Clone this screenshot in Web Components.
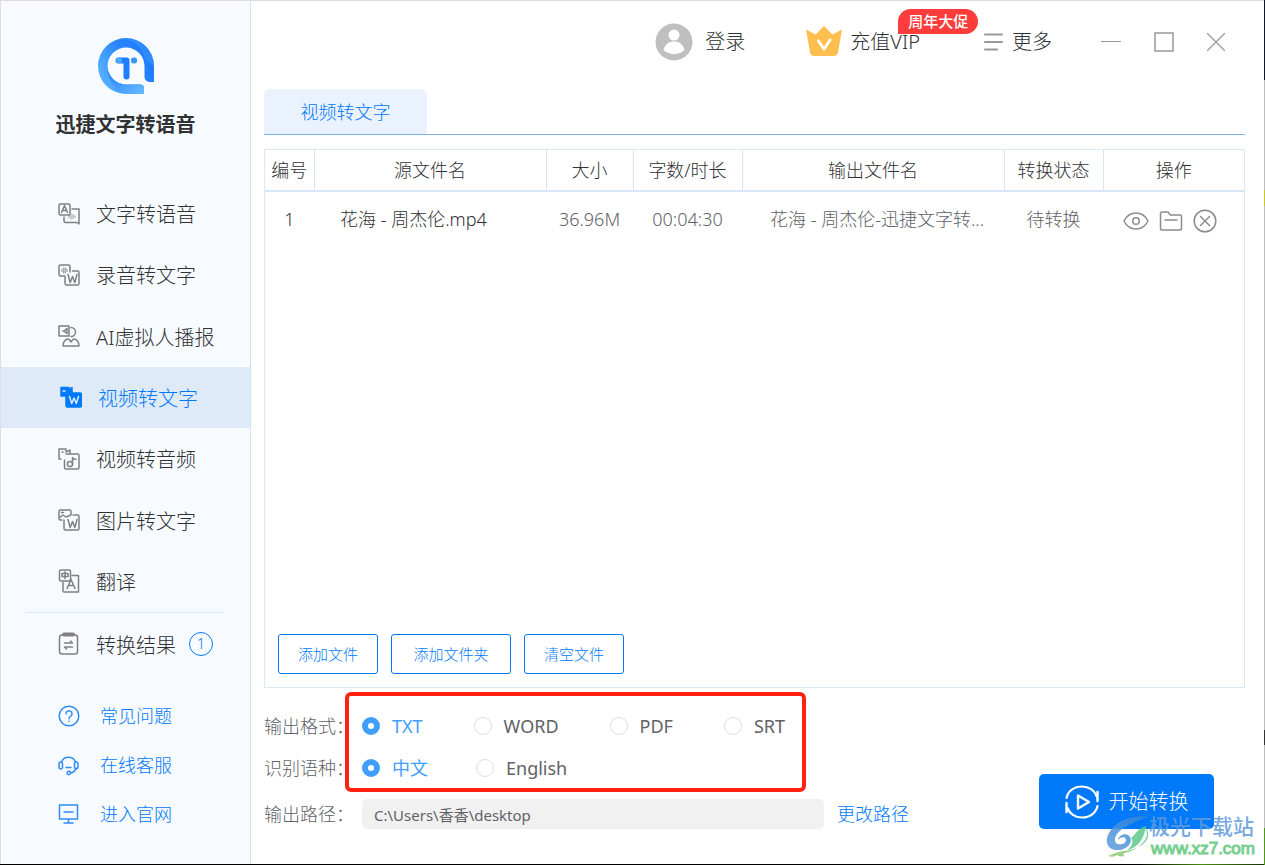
<!DOCTYPE html>
<html lang="zh-CN">
<head>
<meta charset="utf-8">
<title>迅捷文字转语音</title>
<style>
html,body{margin:0;height:100%}
body{font-family:"Noto Sans","Noto Sans CJK SC",sans-serif;color:#303133;font-weight:300}
</style>
</head>
<body>
<app-window></app-window>
<script>
const define=(name,css,html)=>customElements.define(name,class extends HTMLElement{
  connectedCallback(){
    if(this.shadowRoot)return;
    const root=this.attachShadow({mode:"open"});
    const t=document.createElement("template");
    t.innerHTML=`<style>*,:host{box-sizing:border-box}button,input{font:inherit;color:inherit}button{background:none;border:0;padding:0;cursor:pointer}a{color:inherit;text-decoration:none}svg{display:block;flex:none}${css}</style>${typeof html==="function"?html(this):html}`;
    root.append(t.content.cloneNode(true));
  }
});

const svg=(w,h,body)=>`<svg width="${w}" height="${h}" viewBox="0 0 ${w} ${h}" fill="none" stroke="currentColor" stroke-width="1.5" stroke-linecap="round" stroke-linejoin="round" aria-hidden="true">${body}</svg>`;
const W='<path d="M10 10.500l2.200 8 2.300-6 2.300 6 2.200-8"/>';
const icons={
  speech:svg(22,22,'<rect x="1" y="1" width="11" height="11" rx="1.5"/><path d="M3.5 9.5l3-7 3 7M4.500 7.500h4M14 6h7v15l-2-1.500H7.500a1.500 1.500 0 0 1-1.500-1.500v-4"/><path d="M11 12.500v2M13 11v5M15 11.500v4M17 12.800v1.500" stroke-width="1.300" opacity=".6"/>'),
  record:svg(22,22,'<path d="M6 12H2.500A1.500 1.500 0 0 1 1 10.500v-8A1.500 1.500 0 0 1 2.500 1h8A1.500 1.500 0 0 1 12 2.500V6M14.500 7h5A1.500 1.500 0 0 1 21 8.500v11a1.500 1.500 0 0 1-1.500 1.500h-11A1.500 1.500 0 0 1 7 19.500V12M12 6v2"/>'+W+'<path d="M4 5.500v2M5.700 4v5M7.400 4v5M9 5.500v2" stroke-width="1.300" opacity=".7"/>'),
  avatar:svg(22,22,'<path d="M10 11H1V1h10v10M5 6h1l3-2.500v5L6 6.500M13 2.500a4.500 4.500 0 0 1 0 9M5 21c0-4 2.500-7 5-7 1 0 3 3 3 3s2-3 3-3c2.500 0 5 3 5 7z"/>'),
  video:svg(22,22,'<path d="M1 1.500h8v2l3-2v8.500H1z" fill="currentColor"/><rect x="6" y="7" width="15.500" height="14" rx="1.500" fill="currentColor"/><path d="M9.500 10.500l2.200 7 2.300-5.500 2.300 5.500 2.200-7" stroke="#dfeaf8"/><path d="M3 5h2" stroke="#dfeaf8"/>'),
  audio:svg(22,22,'<path d="M3 11H1V1h7v3l4-2v4M4 4h1M8 6h11.500A1.500 1.500 0 0 1 21 7.500v12a1.500 1.500 0 0 1-1.500 1.500H8a1.500 1.500 0 0 1-1.500-1.500V12"/><circle cx="12" cy="16" r="2.600"/><path d="M14.500 16V9.500c.5 1.500 2 2 3.500 1.800"/>'),
  image:svg(22,22,'<path d="M4 11H2.500A1.500 1.500 0 0 1 1 9.500v-7A1.500 1.500 0 0 1 2.500 1h9A1.500 1.500 0 0 1 13 2.500V6M1 9l4-3 3 2 5-2M3.500 3.500h2M15 6h4.500A1.500 1.500 0 0 1 21 7.500v12a1.500 1.500 0 0 1-1.500 1.500h-12A1.500 1.500 0 0 1 6 19.500V11"/>'+W),
  translate:svg(22,24,'<rect x="1.500" y="1" width="11" height="11" rx="1.500"/><path d="M4 4.500h6v3H4zM7 2.800v7M14 6.500h6.500V23H7A1.500 1.500 0 0 1 5 21.500V13M9 19.500l4-9 4 9M10.500 16.500h5"/>'),
  result:svg(22,24,'<rect x="1.500" y="3" width="18" height="19" rx="2.500"/><path d="M6 2.500h9" stroke-width="4"/><path d="M6.500 11h8l-2-2M14.500 15h-8l2 2"/>'),
  help:svg(22,22,'<circle cx="11" cy="11" r="9.800"/><path d="M8 8.800a3 3 0 1 1 4.500 2.600c-1 .6-1.500 1-1.500 2.300M11 16.200v.3"/>'),
  service:svg(22,22,'<path d="M3.500 8a7.500 7.500 0 0 1 14 0M18 14c-.8 3-2.500 4.500-5.500 5M8 13.500h5"/><rect x="1" y="8" width="3.500" height="7" rx="1.700"/><rect x="16.500" y="8" width="3.500" height="7" rx="1.700"/><circle cx="10.800" cy="19" r="1.700"/>'),
  site:svg(22,22,'<path d="M1.500 2h18v14h-18zM6 9h9M10.500 16v3M6 20h9"/>'),
  eye:svg(26,22,'<path d="M1 11C4 5 8 3 13 3s9 2 12 8c-3 6-7 8-12 8S4 17 1 11z"/><circle cx="13" cy="11" r="3.300"/>'),
  folder:svg(24,22,'<path d="M1.500 3.500A1.500 1.500 0 0 1 3 2h6l2.500 3H21a1.500 1.500 0 0 1 1.500 1.500V18.500A1.500 1.500 0 0 1 21 20H3a1.500 1.500 0 0 1-1.500-1.500zM6 10h12"/>'),
  remove:svg(24,24,'<circle cx="12" cy="12" r="10.800"/><path d="M7.500 7.500l9 9M16.500 7.500l-9 9"/>'),
  user:'<svg width="38" height="38" viewBox="0 0 38 38" aria-hidden="true"><circle cx="19" cy="19" r="18.500" fill="#bfbfbf"/><circle cx="19" cy="12" r="5.500" fill="#fff"/><path d="M8.500 27c1.500-6 5.500-8.500 10.500-8.500S28 21 29.500 27c-5 5.500-16 5.500-21 0z" fill="#fff"/></svg>',
  crown:'<svg width="36" height="32" viewBox="0 0 36 32" aria-hidden="true"><path d="M0 3.500l9.500 5L18 0l8.500 8.500 9.500-5-4 23a4.500 4.500 0 0 1-4 3.500H8a4.500 4.500 0 0 1-4-3.500z" fill="#ffbf50"/><path d="M12.500 15l5.500 8 6-9" fill="none" stroke="#fff" stroke-width="2.800" stroke-linecap="round" stroke-linejoin="round"/></svg>',
  menu:svg(19,18,'<path d="M1 1.500h17M1 9h17M1 16.500h12" stroke="#999" stroke-width="2"/>'),
  min:svg(20,20,'<path d="M0 9.500h20" stroke="#999" stroke-width="1" stroke-linecap="butt"/>'),
  max:svg(20,20,'<path d="M1 1h18v18H1z" stroke="#999" stroke-linejoin="miter"/>'),
  close:svg(18,18,'<path d="M.5.500l17 17M17.500.500l-17 17" stroke="#999" stroke-width="1.200"/>'),
  start:svg(34,34,'<path d="M1.500 13C3 6 9 1.500 17 1.500c7 0 12.500 4 14.500 9.500M32.500 21C31 28 25 32.500 17 32.500c-7 0-12.500-4-14.500-9.500" stroke-width="2.200"/><path d="M32.500 7v9M1.500 18v9" stroke-width="2.400"/><path d="M13 10.500v13l11-6.500z" stroke-width="2.400"/>')
};

define("app-logo",`:host{display:block}`,`<svg width="56" height="56" viewBox="0 0 56 56" role="img" aria-label="logo">
<defs><linearGradient id="a" x1="0" y1=".7" x2="1" y2=".2"><stop offset="0" stop-color="#5ab4ff"/><stop offset=".5" stop-color="#2b86fb"/><stop offset="1" stop-color="#1a78ff"/></linearGradient>
<linearGradient id="b" x1="0" y1="0" x2="1" y2="1"><stop offset="0" stop-color="#1a78ff"/><stop offset="1" stop-color="#66bdff"/></linearGradient></defs>
<path d="M28 0a28 28 0 0 1 28 28v16h-4.500a5 5 0 0 1-5-5V28A18.500 18.500 0 1 0 28 46.500h14a4 4 0 0 1 4 4V56H28a28 28 0 0 1 0-56z" fill="url(#a)"/>
<path d="M9.500 28v3C10 42 17 51 28 56h18v-5.500a4 4 0 0 0-4-4H28A18.500 18.500 0 0 1 9.500 28z" fill="url(#b)"/>
<path d="M24 1c13 1 20 9 23 20l9 7A28 28 0 0 0 24 1z" fill="#4ea6ff" opacity=".35"/>
<path d="M20.500 19.500h8a3 3 0 0 1 3 3v16a2.800 2.800 0 0 1-6 0V25.500h-5a3 3 0 0 1 0-6z" fill="#1f7dff"/><circle cx="21" cy="22.500" r="3" fill="#4ea6ff"/><rect x="33" y="19.500" width="6" height="6" rx="2.500" fill="#3a95ff"/></svg>`);

define("nav-item",`:host{display:block}
a{display:flex;align-items:center;height:100%;padding-left:57px;font-size:20px;gap:16px}
i{width:22px;color:#808080;display:flex}
:host([active]) a{background:#dfeaf8;color:#0079fb;padding-left:59px}:host([active]) i{color:#0079fb}`,
e=>`<a href="#${e.getAttribute("icon")}"><i>${icons[e.getAttribute("icon")]}</i><slot></slot></a>`);

define("help-link",`:host{display:block}
a{display:flex;align-items:center;gap:20px;color:#0079fb;font-size:18px;line-height:24px}svg{color:#2f8df5}`,
e=>`<a href="#${e.getAttribute("icon")}">${icons[e.getAttribute("icon")]}<slot></slot></a>`);

define("side-bar",`:host{display:flex;flex-direction:column;flex:none;width:250px;background:#f7fbff;border-right:1px solid #cfe2f7}
header{display:flex;flex-direction:column;align-items:center;gap:16px;padding-top:37px;height:182px}
h1{margin:0;font-size:20px;line-height:30px;font-weight:700}
nav{display:grid;grid-template-rows:repeat(7,1fr);height:429px}
hr{border:0;border-top:1px solid #dcebfb;margin:0 25px;width:199px}
.result{display:flex;align-items:center;height:62px;gap:13px}
.badge{width:24px;height:24px;border:1px solid #0079fb;border-radius:50%;color:#0079fb;font-size:14px;line-height:22px;text-align:center}
.help{display:grid;gap:25px;padding:29px 0 0 57px}`,
`<header><app-logo></app-logo><h1>迅捷文字转语音</h1></header>
<nav><nav-item icon="speech">文字转语音</nav-item><nav-item icon="record">录音转文字</nav-item><nav-item icon="avatar">AI虚拟人播报</nav-item><nav-item icon="video" active>视频转文字</nav-item><nav-item icon="audio">视频转音频</nav-item><nav-item icon="image">图片转文字</nav-item><nav-item icon="translate">翻译</nav-item></nav>
<hr>
<div class="result"><nav-item icon="result">转换结果</nav-item><span class="badge">1</span></div>
<div class="help"><help-link icon="help">常见问题</help-link><help-link icon="service">在线客服</help-link><help-link icon="site">进入官网</help-link></div>`);

define("title-bar",`:host{display:flex;justify-content:flex-end;align-items:center;height:82px;padding-right:20px}
button{display:flex;align-items:center;font-size:20px;line-height:30px}
.user{gap:12px;margin-right:61px}.vip{gap:8px;margin-right:64px;position:relative}.more{gap:9px;margin-right:49px}
.win{display:flex;align-items:center;gap:33px}
.tag{position:absolute;left:92px;top:-17px;width:80px;height:25px;border-radius:13px 13px 13px 0;background:#ff3c3c;color:#fff;font-size:15px;line-height:25px;font-weight:500;text-align:center}`,
`<button class="user" type="button">${icons.user}登录</button>
<button class="vip" type="button">${icons.crown}充值VIP<span class="tag">周年大促</span></button>
<button class="more" type="button">${icons.menu}更多</button>
<div class="win"><button type="button" aria-label="最小化">${icons.min}</button><button type="button" aria-label="最大化">${icons.max}</button><button type="button" aria-label="关闭">${icons.close}</button></div>`);

define("tab-strip",`:host{display:block;border-bottom:1px solid #7fb2e8;margin-top:6px}
button{display:block;width:163px;height:45px;background:#eaf2fe;border-radius:6px 6px 0 0;color:#0079fb;font-size:18px;padding-bottom:2px}`,
`<button type="button" role="tab" aria-selected="true"><slot></slot></button>`);

define("file-table",`:host{display:block}
table{border-collapse:collapse;table-layout:fixed;width:100%;font-size:18px;line-height:24px}
th{font-weight:300;height:41px;padding:0;border-right:1px solid #d7e7f8;border-bottom:2px solid #d7e7f8}
th:last-child{border-right:0}
td{height:54px;padding:0;text-align:center;color:#606266;white-space:nowrap;overflow:hidden;text-overflow:ellipsis}
td.dark{color:#303133}td.name{text-align:left;padding-left:26px}td.out{padding:0 0 0 28px;text-align:left}
.ops{display:flex;justify-content:center;gap:10px;color:#8c8c8c;padding:4px 8px 0 0;align-items:center}
.n{width:49px}.s{width:232px}.z{width:87px}.t{width:109px}.st{width:99px}.op{width:141px}`,
`<table><colgroup><col class="n"><col class="s"><col class="z"><col class="t"><col><col class="st"><col class="op"></colgroup>
<thead><tr><th>编号</th><th>源文件名</th><th>大小</th><th>字数/时长</th><th>输出文件名</th><th>转换状态</th><th>操作</th></tr></thead>
<tbody><tr><td class="dark">1</td><td class="dark name">花海 - 周杰伦.mp4</td><td>36.96M</td><td>00:04:30</td><td class="out">花海 - 周杰伦-迅捷文字转...</td><td>待转换</td>
<td><div class="ops"><button type="button" aria-label="预览">${icons.eye}</button><button type="button" aria-label="打开文件夹">${icons.folder}</button><button type="button" aria-label="移除">${icons.remove}</button></div></td></tr></tbody></table>`);

define("outline-button",`:host{display:block}
button{height:40px;padding:0 19px 1px;border:1px solid #0079fb;border-radius:3px;color:#0079fb;font-size:15px;min-width:100px}
:host([wide]) button{min-width:120px}`,`<button type="button"><slot></slot></button>`);

define("file-panel",`:host{display:flex;flex-direction:column;flex:1;margin-top:14px;border:1px solid #dbe8f5}
.actions{display:flex;gap:13px;margin-top:auto;padding:13px}`,
`<file-table></file-table><div class="actions"><outline-button>添加文件</outline-button><outline-button wide>添加文件夹</outline-button><outline-button>清空文件</outline-button></div>`);

define("radio-set",`:host{display:flex;gap:51px;height:42px;align-items:center}
:host([compact]){gap:48px}
label{display:flex;align-items:center;gap:12px;font-size:18px;line-height:24px;color:#606266;font-weight:400}
input{appearance:none;margin:0;width:18px;height:18px;border:1px solid #dcdfe6;border-radius:50%;background:#fff}
input:checked{border:6px solid #409eff}
label:has(:checked){color:#409eff}`,
e=>e.getAttribute("options").split(",").map((o,i)=>`<label><input type="radio" name="${e.getAttribute("name")}"${i?"":" checked"}>${o}</label>`).join(""));

define("output-settings",`:host{display:grid;grid-template-columns:81px 1fr;color:#606266;font-size:18px;line-height:24px;margin-top:4px}
.labels{padding:13px 0 0}.labels span{display:flex;align-items:center;height:42px;white-space:nowrap}
.frame{justify-self:start;width:461px;height:100px;border:4px solid #ff2213;border-radius:6px;padding:9px 0 0 13px}
.path{grid-column:1/3;display:flex;align-items:center;margin-top:7px;white-space:nowrap}
.path label{width:98px}
.path input{width:462px;height:30px;border:0;border-radius:5px;background:#f1f1f1;padding:0 12px;font-size:15px;font-weight:400;margin-right:13px}
.path a{color:#0079fb}`,
`<div class="labels"><span>输出格式：</span><span>识别语种：</span></div>
<div class="frame"><radio-set name="format" options="TXT,WORD,PDF,SRT"></radio-set><radio-set compact name="lang" options="中文,English"></radio-set></div>
<div class="path"><label for="p">输出路径：</label><input id="p" type="text" readonly value="C:\\Users\\香香\\desktop"><a href="#path">更改路径</a></div>`);

define("start-button",`:host{display:block}
button{display:flex;align-items:center;justify-content:center;gap:10px;width:175px;height:55px;border-radius:5px;background:#0079fb;color:#fff;font-size:20px;line-height:24px}`,
`<button type="button">${icons.start}<slot></slot></button>`);

define("site-mark",`:host{position:absolute;right:10px;bottom:7px;display:flex;align-items:center;opacity:.85;pointer-events:none}
div{display:grid}b{font-family:"Liberation Sans","Noto Sans CJK SC",sans-serif;font-size:21px;line-height:24px;color:#5f9bdc;font-weight:500}
span{font:17px/19px "Liberation Sans",sans-serif;color:#5ec87c;-webkit-text-stroke:1px #5ec87c;padding-left:2px}`,
`<svg width="43" height="41" viewBox="0 0 43 41" aria-hidden="true"><defs><linearGradient id="g" x1="0" y1="1" x2="1" y2="0"><stop offset="0" stop-color="#5f9bdc"/><stop offset="1" stop-color="#2f86d8"/></linearGradient><linearGradient id="h"><stop offset="0" stop-color="#9ccf6a"/><stop offset="1" stop-color="#5ec88c"/></linearGradient></defs>
<path d="M43 1C24-2 9 6 3 17-3 28 4 35 13 34c9-1 14-8 11-13-3-5-11-3-12 3 4-4 8-3 8 0 0 4-7 6-10 3C6 22 13 14 21 10c7-4 14-7 22-9z" fill="url(#g)"/><path d="M39 10c10 14-6 24-22 25-6 1-11 3-15 5 3 1 7 1 9-1 1 1 4 2 8 1-2-1-2-1-1-3 12-2 21-10 23-18 0-3-1-6-2-9z" fill="url(#h)"/><path d="M40 10c-8 2-10 8-15 12 3 3 1 9-4 12 10-2 17-10 19-24z" fill="#5ec88c"/></svg><div><b>极光下载站</b><span>www.xz7.com</span></div>`);

define("app-window",`:host{min-height:100vh;padding:1px;position:relative;
background:linear-gradient(#10182e 0 80px,#bdbdbd 80px 190px,#c9c820 190px 206px,#bdbdbd 206px 730px,#333 730px 745px,#bdbdbd 745px 828px,#4c9a14 828px) right/1px 100% no-repeat,linear-gradient(90deg,#000 0 90%,#4c8a10 95%,#183008) bottom/100% 1px no-repeat,#dedede;display:flex}
main{flex:1;min-width:0;display:flex;flex-direction:column;background:#fff;padding:0 19px 35px 13px}
.foot{display:flex;justify-content:space-between;align-items:flex-end}
start-button{margin-right:31px}`,
`<side-bar></side-bar><main><title-bar></title-bar><tab-strip>视频转文字</tab-strip><file-panel></file-panel>
<div class="foot"><output-settings></output-settings><start-button>开始转换</start-button></div></main><site-mark></site-mark>`);
</script>
</body>
</html>
